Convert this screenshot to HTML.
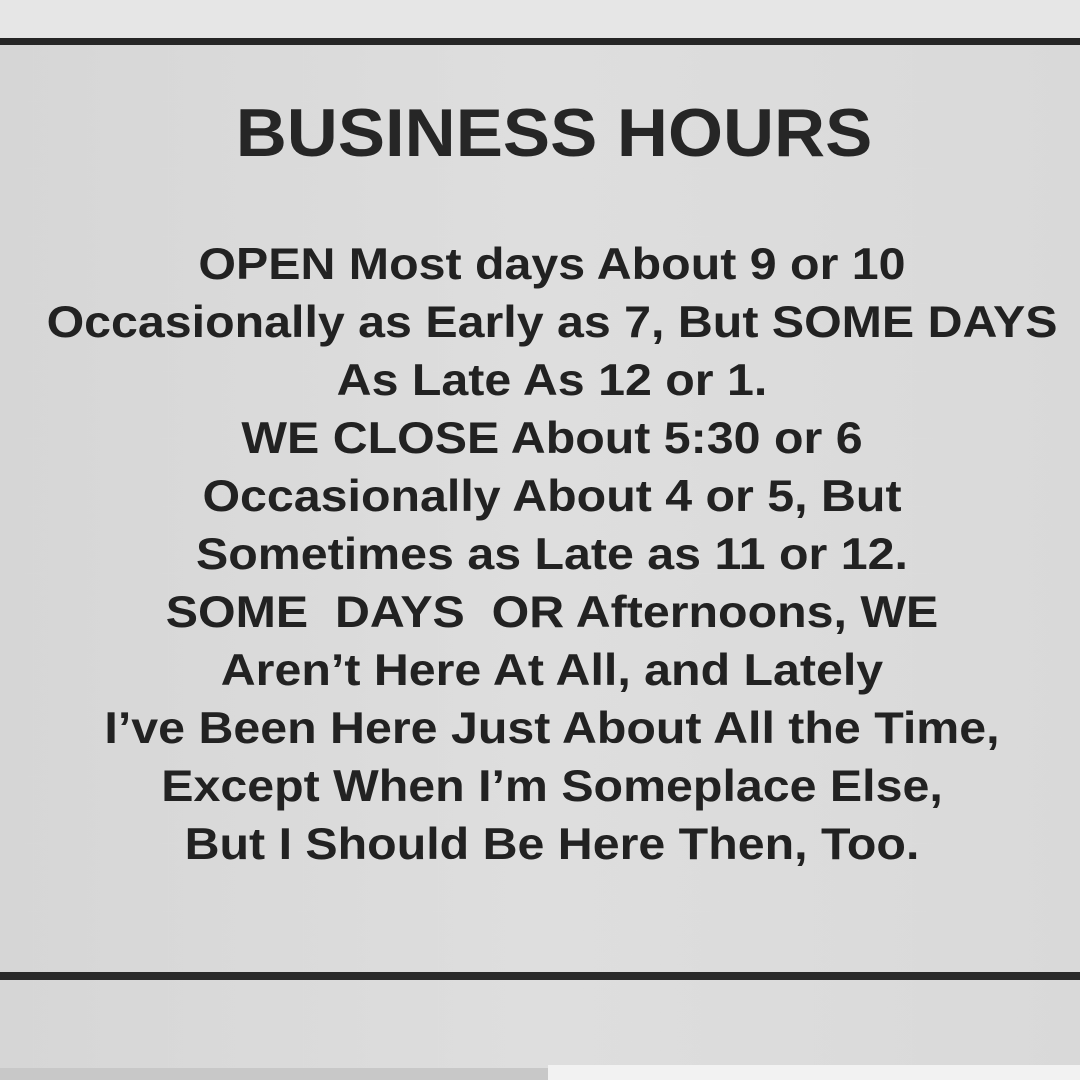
<!DOCTYPE html>
<html><head><style>
html,body{margin:0;padding:0}
body{width:1080px;height:1080px;position:relative;overflow:hidden;background:linear-gradient(90deg,#d6d6d6 0%,#dedede 50%,#d9d9d9 100%);font-family:"Liberation Sans",Arial,sans-serif;color:#222}
.top{position:absolute;left:0;top:0;width:1080px;height:38px;background:#e6e6e6}
.l1{position:absolute;left:0;top:38px;width:1080px;height:7px;background:#262626}
.l2{position:absolute;left:0;top:972px;width:1080px;height:8px;background:#2a2a2a}
.bot{position:absolute;left:0;top:1068px;width:1080px;height:12px;background:#c8c8c8}
.bot2{position:absolute;left:548px;top:1065px;width:532px;height:15px;background:#f2f2f2}
.t{position:absolute;left:0;width:1080px;text-align:center;font-weight:bold;white-space:pre}
h1{position:absolute;left:0;top:94px;width:1080px;margin:0;text-align:center;font-size:68px;font-weight:bold;color:#262626;transform:translateX(14px) scaleX(1.04)}
.b{font-size:44.5px;line-height:58px;transform:translateX(12px) scaleX(1.086)}
</style></head><body>
<div class="top"></div><div class="l1"></div><div class="l2"></div><div class="bot"></div><div class="bot2"></div>
<h1>BUSINESS HOURS</h1>
<div class="t b" style="top:236px">OPEN Most days About 9 or 10
Occasionally as Early as 7, But SOME DAYS
As Late As 12 or 1.
WE CLOSE About 5:30 or 6
Occasionally About 4 or 5, But
Sometimes as Late as 11 or 12.
SOME  DAYS  OR Afternoons, WE
Aren’t Here At All, and Lately
I’ve Been Here Just About All the Time,
Except When I’m Someplace Else,
But I Should Be Here Then, Too.</div>
</body></html>
